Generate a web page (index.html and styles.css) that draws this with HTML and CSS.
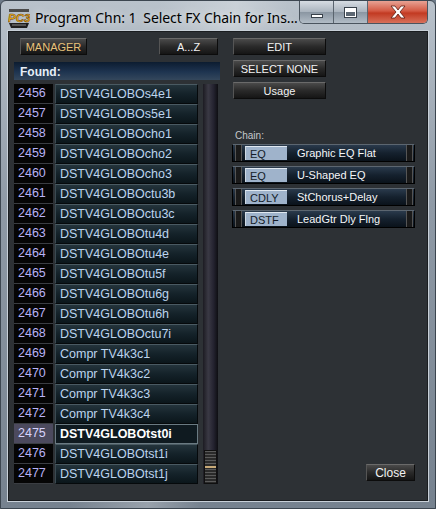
FILE: index.html
```html
<!DOCTYPE html>
<html lang="en">

<head>
    <meta charset="UTF-8">
    <title>Program Chn: 1 Select FX Chain</title>
    <link rel="stylesheet" href="styles.css">
</head>

<body>
    <div class="window">
        <!-- Title bar -->
        <div class="titlebar">
            <svg class="app-icon" width="22" height="22" viewBox="0 0 22 22">
                <rect x="1" y="1" width="20" height="3" fill="#4a4a4a"/>
                <text x="0" y="14" font-family="Liberation Sans" font-style="italic" font-weight="bold" font-size="11.5" fill="#f5b81e" stroke="#6a3a00" stroke-width="0.5">PC3</text>
                <path d="M1 15 L21 15 L19 20 L3 20 Z" fill="#1e1e1e"/>
                <rect x="4" y="16.5" width="14" height="1" fill="#888"/>
            </svg>
            <span class="title">Program Chn: 1&nbsp; Select FX Chain for Ins...</span>
            <div class="win-buttons">
                <div class="wbtn min"><span class="min-glyph"></span></div>
                <div class="wbtn max"><span class="max-glyph"></span></div>
                <div class="wbtn close">
                    <svg width="18" height="14" viewBox="0 0 18 14">
                        <path d="M2 1 L6 1 L9 5 L12 1 L16 1 L11 7 L16 13 L12 13 L9 9 L6 13 L2 13 L7 7 Z" fill="#fff" stroke="#5a1a10" stroke-width="0.8"/>
                    </svg>
                </div>
            </div>
        </div>

        <!-- Client area -->
        <div class="client">
            <div class="left">
                <div class="top-buttons">
                    <button class="btn manager">MANAGER</button>
                    <button class="btn az">A...Z</button>
                </div>
                <div class="found">Found:</div>
                <div class="list-wrap">
                    <div class="list" id="list"></div>
                    <div class="scrollbar">
                        <div class="thumb"><span class="thumb-mark"></span></div>
                    </div>
                </div>
            </div>

            <div class="right">
                <button class="btn side">EDIT</button>
                <button class="btn side">SELECT NONE</button>
                <button class="btn side">Usage</button>

                <div class="chain-label">Chain:</div>
                <div class="chain">
                    <div class="rack"><span class="screw l"></span><span class="tag">EQ</span><span class="fx">Graphic EQ Flat</span><span class="screw r"></span></div>
                    <div class="rack"><span class="screw l"></span><span class="tag">EQ</span><span class="fx">U-Shaped EQ</span><span class="screw r"></span></div>
                    <div class="rack"><span class="screw l"></span><span class="tag">CDLY</span><span class="fx">StChorus+Delay</span><span class="screw r"></span></div>
                    <div class="rack"><span class="screw l"></span><span class="tag">DSTF</span><span class="fx">LeadGtr Dly Flng</span><span class="screw r"></span></div>
                </div>

                <div class="spacer"></div>
                <div class="bottom">
                    <button class="btn closebtn">Close</button>
                </div>
            </div>
        </div>
    </div>

    <script>
        const items = [
            ["2456", "DSTV4GLOBOs4e1"],
            ["2457", "DSTV4GLOBOs5e1"],
            ["2458", "DSTV4GLOBOcho1"],
            ["2459", "DSTV4GLOBOcho2"],
            ["2460", "DSTV4GLOBOcho3"],
            ["2461", "DSTV4GLOBOctu3b"],
            ["2462", "DSTV4GLOBOctu3c"],
            ["2463", "DSTV4GLOBOtu4d"],
            ["2464", "DSTV4GLOBOtu4e"],
            ["2465", "DSTV4GLOBOtu5f"],
            ["2466", "DSTV4GLOBOtu6g"],
            ["2467", "DSTV4GLOBOtu6h"],
            ["2468", "DSTV4GLOBOctu7i"],
            ["2469", "Compr TV4k3c1"],
            ["2470", "Compr TV4k3c2"],
            ["2471", "Compr TV4k3c3"],
            ["2472", "Compr TV4k3c4"],
            ["2475", "DSTV4GLOBOtst0i"],
            ["2476", "DSTV4GLOBOtst1i"],
            ["2477", "DSTV4GLOBOtst1j"]
        ];
        const list = document.getElementById("list");

        items.forEach(function (item) {
            const row = document.createElement("div");
            row.className = "row";
            if (item[0] === "2475") {
                row.className += " selected";
            }
            row.innerHTML = '<span class="num">' + item[0] + '</span><span class="name">' + item[1] + '</span>';
            list.appendChild(row);
        });
    </script>
</body>

</html>
```

FILE: styles.css
```css
/* Basic Reset */
* {
    box-sizing: border-box;
    margin: 0;
    padding: 0;
}

body {
    width: 436px;
    height: 509px;
    overflow: hidden;
    background: #6d7a88;
    font-family: 'Liberation Sans', Arial, sans-serif;
}

/* Window Frame */
.window {
    width: 436px;
    height: 509px;
    display: flex;
    flex-direction: column;
    border: 1px solid #3c4650;
    border-radius: 6px 6px 0 0;
    background:
        linear-gradient(100deg, rgba(255, 255, 255, 0) 30%, rgba(255, 255, 255, 0.25) 45%, rgba(255, 255, 255, 0) 55%),
        linear-gradient(180deg, #b9c2cb 0%, #8f9aa6 40%, #76828f 100%);
}

/* Title Bar */
.titlebar {
    height: 30px;
    display: flex;
    align-items: flex-start;
    padding-left: 7px;
}

.app-icon {
    margin-top: 7px;
    flex-shrink: 0;
}

.title {
    margin-top: 7px;
    margin-left: 5px;
    font-family: 'Noto Sans', sans-serif;
    font-size: 14px;
    letter-spacing: -0.1px;
    color: #000;
    text-shadow: 0 0 8px rgba(255, 255, 255, 0.9);
    white-space: nowrap;
}

.win-buttons {
    flex-shrink: 0;
    margin-left: auto;
    margin-right: 7px;
    display: flex;
    height: 23px;
    border: 1px solid #4a545e;
    border-top: none;
    border-radius: 0 0 5px 5px;
    overflow: hidden;
}

.wbtn {
    display: flex;
    align-items: center;
    justify-content: center;
    height: 100%;
}

.wbtn.min,
.wbtn.max {
    width: 34px;
    background: linear-gradient(180deg, #d6dce2 0%, #a9b3bd 50%, #8a96a2 51%, #b2bcc6 100%);
    border-right: 1px solid #5a646e;
}

.min-glyph {
    width: 12px;
    height: 4px;
    margin-top: 8px;
    background: #fff;
    border: 1px solid #38414a;
}

.max-glyph {
    width: 13px;
    height: 11px;
    border: 1px solid #38414a;
    box-shadow: inset 0 0 0 1px #fff, inset 0 3px 0 1px #fff;
    background: #5d6873;
}

.wbtn.close {
    width: 59px;
    background: linear-gradient(180deg, #e8a294 0%, #d45a44 45%, #c23a22 55%, #d8705a 100%);
}

/* Client Area */
.client {
    flex: 1;
    margin: 0 7px 7px 7px;
    background: #2d3135;
    border: 1px solid #1a1d20;
    box-shadow: 0 0 0 1px #c8d0d8;
    display: flex;
    padding: 6px 0 0 5px;
}

.left {
    width: 206px;
    display: flex;
    flex-direction: column;
}

/* Buttons */
.btn {
    font-family: 'Liberation Sans', Arial, sans-serif;
    font-size: 11px;
    color: #f2f2f2;
    height: 17px;
    background: linear-gradient(180deg, #4a4a4a 0%, #2a2a2a 50%, #151515 100%);
    border: 1px solid #0c0c0c;
    border-top-color: #6a6a6a;
    border-left-color: #555;
    cursor: pointer;
}

.top-buttons {
    display: flex;
    justify-content: space-between;
    padding: 0 2px 0 6px;
}

.btn.manager {
    width: 67px;
    color: #e8c27a;
}

.btn.az {
    width: 59px;
}

.found {
    margin-top: 7px;
    height: 18px;
    padding: 3px 0 0 6px;
    font-size: 12px;
    font-weight: bold;
    color: #e6eef6;
    background: linear-gradient(180deg, #0c1c30 0%, #1e3450 55%, #34475c 100%);
}

/* List */
.list-wrap {
    margin-top: 4px;
    display: flex;
}

.list {
    width: 184px;
    display: flex;
    flex-direction: column;
}

.row {
    height: 20px;
    display: flex;
}

.num {
    width: 39px;
    background: #050505;
    border-bottom: 1px solid #3a3d42;
    color: #b8b2f6;
    font-size: 12.5px;
    padding: 2px 0 0 4px;
}

.name {
    margin-left: 2px;
    width: 143px;
    background: linear-gradient(180deg, #24343c 0%, #142229 50%, #0b161b 100%);
    border: 1px solid #05090b;
    border-top-color: #4a5a62;
    border-left-color: #3a4a52;
    color: #bcd4ee;
    font-size: 12.5px;
    padding: 2px 0 0 4px;
    white-space: nowrap;
}

.row.selected .num {
    background: #4c4a5e;
    color: #d8d4ff;
}

.row.selected .name {
    background: #0f1a20;
    border-color: #6a7a82;
    color: #ffffff;
    font-weight: bold;
}

.scrollbar {
    margin-left: 5px;
    width: 15px;
    height: 400px;
    background: linear-gradient(90deg, #1c1b22 0%, #3a3944 35%, #242330 70%, #0e0e12 100%);
    display: flex;
    flex-direction: column;
    justify-content: flex-end;
}

.thumb {
    height: 34px;
    margin: 0 1px;
    border: 1px solid #101010;
    background: repeating-linear-gradient(180deg, #5a5a5a 0px, #5a5a5a 1px, #2a2a2a 1px, #2a2a2a 3px);
    display: flex;
    align-items: center;
}

.thumb-mark {
    width: 100%;
    height: 2px;
    background: #c8aa78;
}

/* Right column */
.right {
    flex: 1;
    display: flex;
    flex-direction: column;
    padding-left: 13px;
}

.btn.side {
    width: 93px;
    margin-bottom: 5px;
}

.chain-label {
    margin-top: 26px;
    font-size: 10px;
    color: #c4c8cc;
    margin-left: 2px;
}

.chain {
    margin-top: 3px;
    margin-left: -1px;
    width: 183px;
    display: flex;
    flex-direction: column;
    gap: 4px;
}

.rack {
    height: 18px;
    display: flex;
    align-items: center;
    background: linear-gradient(180deg, #2a3a4c 0%, #15212e 50%, #0a121a 100%);
    border: 1px solid #000;
    border-top-color: #5c6670;
}

.screw {
    width: 7px;
    height: 100%;
    background: #1a1a1a;
    border-left: 1px solid #555;
    border-right: 1px solid #555;
}

.screw.l {
    margin-left: 2px;
}

.screw.r {
    margin-left: auto;
    margin-right: 1px;
}

.tag {
    margin-left: 3px;
    width: 42px;
    height: 14px;
    background: #9fb3cb;
    border-top: 1px solid #e0e8f0;
    border-left: 1px solid #d0dae4;
    font-size: 11px;
    color: #141c28;
    padding: 1px 0 0 4px;
}

.fx {
    margin-left: 10px;
    font-size: 11px;
    color: #f4f6f8;
}

.spacer {
    flex: 1;
}

.bottom {
    display: flex;
    justify-content: flex-end;
    padding: 0 12px 19px 0;
}

.btn.closebtn {
    width: 49px;
    font-size: 12px;
}
```
